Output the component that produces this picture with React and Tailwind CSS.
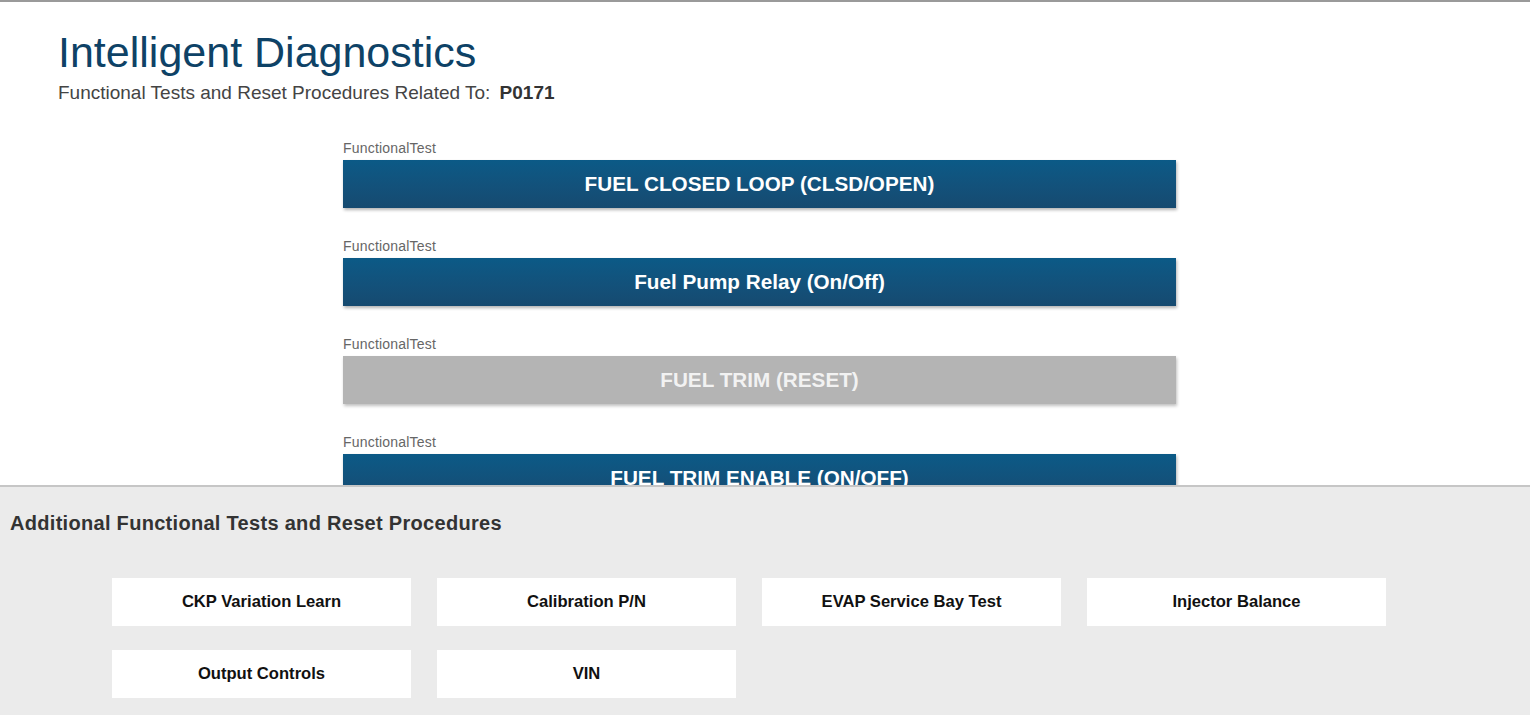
const tests = [
  { label: "FUEL CLOSED LOOP (CLSD/OPEN)", enabled: true },
  { label: "Fuel Pump Relay (On/Off)", enabled: true },
  { label: "FUEL TRIM (RESET)", enabled: false },
  { label: "FUEL TRIM ENABLE (ON/OFF)", enabled: true },
];

const extras = [
  "CKP Variation Learn",
  "Calibration P/N",
  "EVAP Service Bay Test",
  "Injector Balance",
  "Output Controls",
  "VIN",
];

export default function App() {
  return (
    <div className="h-[715px] w-full flex flex-col overflow-hidden bg-white font-['Liberation_Sans',Arial,sans-serif]">
      <div className="h-[485px] shrink-0 overflow-hidden border-t-2 border-[#9a9a9a]">
        <div className="pl-[58px] pt-[26px]">
          <h1 className="text-[43px] leading-[48px] text-[#0e4266]">
            Intelligent Diagnostics
          </h1>
          <p className="mt-[5px] text-[19px] leading-[24px] text-[#444]">
            Functional Tests and Reset Procedures Related To:{" "}
            <span className="ml-1 font-bold text-[#333]">P0171</span>
          </p>
        </div>

        <div className="ml-[343px] w-[833px] mt-[35px] flex flex-col gap-[30px]">
          {tests.map((t) => (
            <div key={t.label}>
              <div className="text-[14px] leading-[16px] tracking-[0.2px] text-[#666]">
                FunctionalTest
              </div>
              <button
                className={
                  t.enabled
                    ? "mt-[4px] w-full h-[48px] flex items-center justify-center bg-gradient-to-b from-[#0b5a87] to-[#164a70] text-white text-[20.7px] font-bold shadow-[1px_2px_3px_rgba(0,0,0,0.3)]"
                    : "mt-[4px] w-full h-[48px] flex items-center justify-center bg-[#b4b4b4] text-[#f2f2f2] text-[20.7px] font-bold shadow-[1px_2px_3px_rgba(0,0,0,0.25)]"
                }
              >
                {t.label}
              </button>
            </div>
          ))}
        </div>
      </div>

      <div className="flex-1 border-t-2 border-[#c6c6c6] bg-[#ebebeb] px-[10px] pt-[24px]">
        <h2 className="text-[20px] leading-[24px] tracking-[0.3px] font-bold text-[#333]">
          Additional Functional Tests and Reset Procedures
        </h2>
        <div className="mt-[43px] ml-[102px] grid grid-cols-[repeat(4,299px)] gap-x-[26px] gap-y-[24px]">
          {extras.map((e) => (
            <button
              key={e}
              className="h-[48px] bg-white flex items-center justify-center text-[16.6px] font-bold text-[#111]"
            >
              {e}
            </button>
          ))}
        </div>
      </div>
    </div>
  );
}
